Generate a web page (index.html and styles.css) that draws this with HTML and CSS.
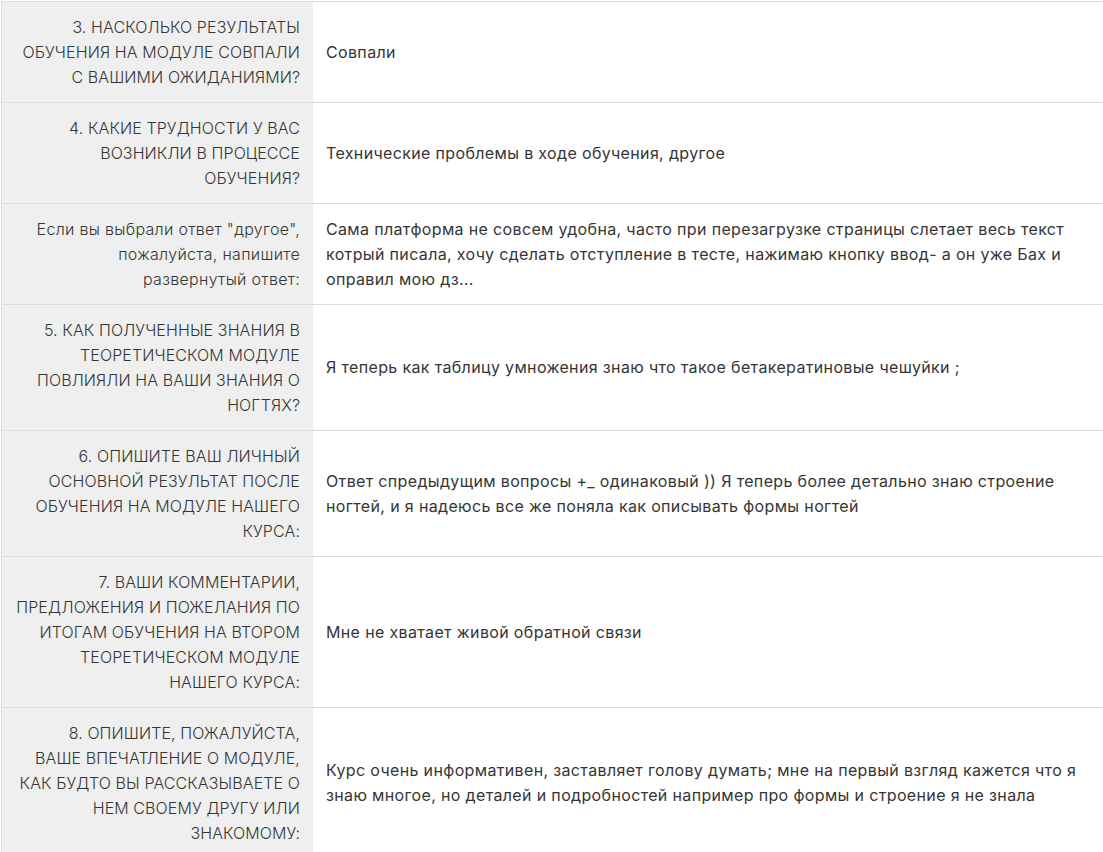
FILE: index.html
```html
<!DOCTYPE html>
<html lang="ru">
<head>
<meta charset="utf-8">
<link rel="stylesheet" href="styles.css">
</head>
<body>
<div class="wrap">
<table class="answers">
<tbody>
<tr><th>3. Насколько результаты обучения на модуле совпали с вашими ожиданиями?</th><td>Совпали</td></tr>
<tr><th>4. Какие трудности у вас возникли в процессе обучения?</th><td>Технические проблемы в ходе обучения, другое</td></tr>
<tr><th class="plain">Если вы выбрали ответ "другое", пожалуйста, напишите развернутый ответ:</th><td>Сама платформа не совсем удобна, часто при перезагрузке страницы слетает весь текст котрый писала, хочу сделать отступление в тесте, нажимаю кнопку ввод- а он уже Бах и оправил мою дз...</td></tr>
<tr><th>5. Как полученные знания в теоретическом модуле повлияли на ваши знания о ногтях?</th><td>Я теперь как таблицу умножения знаю что такое бетакератиновые чешуйки ;</td></tr>
<tr><th>6. Опишите ваш личный основной результат после обучения на модуле нашего курса:</th><td>Ответ спредыдущим вопросы +_ одинаковый )) Я теперь более детально знаю строение ногтей, и я надеюсь все же поняла как описывать формы ногтей</td></tr>
<tr><th>7. Ваши комментарии, предложения и пожелания по итогам обучения на втором теоретическом модуле нашего курса:</th><td>Мне не хватает живой обратной связи</td></tr>
<tr><th>8. Опишите, пожалуйста, ваше&nbsp;впечатление о модуле, как будто вы рассказываете о нем своему другу или знакомому:</th><td>Курс очень информативен, заставляет голову думать; мне на первый взгляд кажется что я знаю многое, но деталей и подробностей например про формы и строение я не знала</td></tr>
</tbody>
</table>
</div>
</body>
</html>
```

FILE: styles.css
```css
html, body {
  margin: 0;
  padding: 0;
  background: #fff;
}
.wrap {
  padding: 1px 0 0 1px;
}
.answers {
  border-collapse: collapse;
  width: 1110px;
  font-family: Inter, "Noto Sans", sans-serif;
  font-size: 16px;
  line-height: 25px;
  color: #353535;
  border-left: 1px solid #dcdcdc;
}
.answers tr {
  border-top: 1px solid #dcdcdc;
}
.answers th {
  width: 285px;
  padding: 12.5px 13px;
  background: #efefef;
  text-align: right;
  font-weight: 300;
  text-transform: uppercase;
  letter-spacing: 0.1px;
  vertical-align: middle;
}
.answers th.plain {
  text-transform: none;
  letter-spacing: 0.3px;
}
.answers td {
  padding: 12.5px 13px;
  vertical-align: middle;
  font-weight: 400;
  letter-spacing: 0.35px;
}
```
